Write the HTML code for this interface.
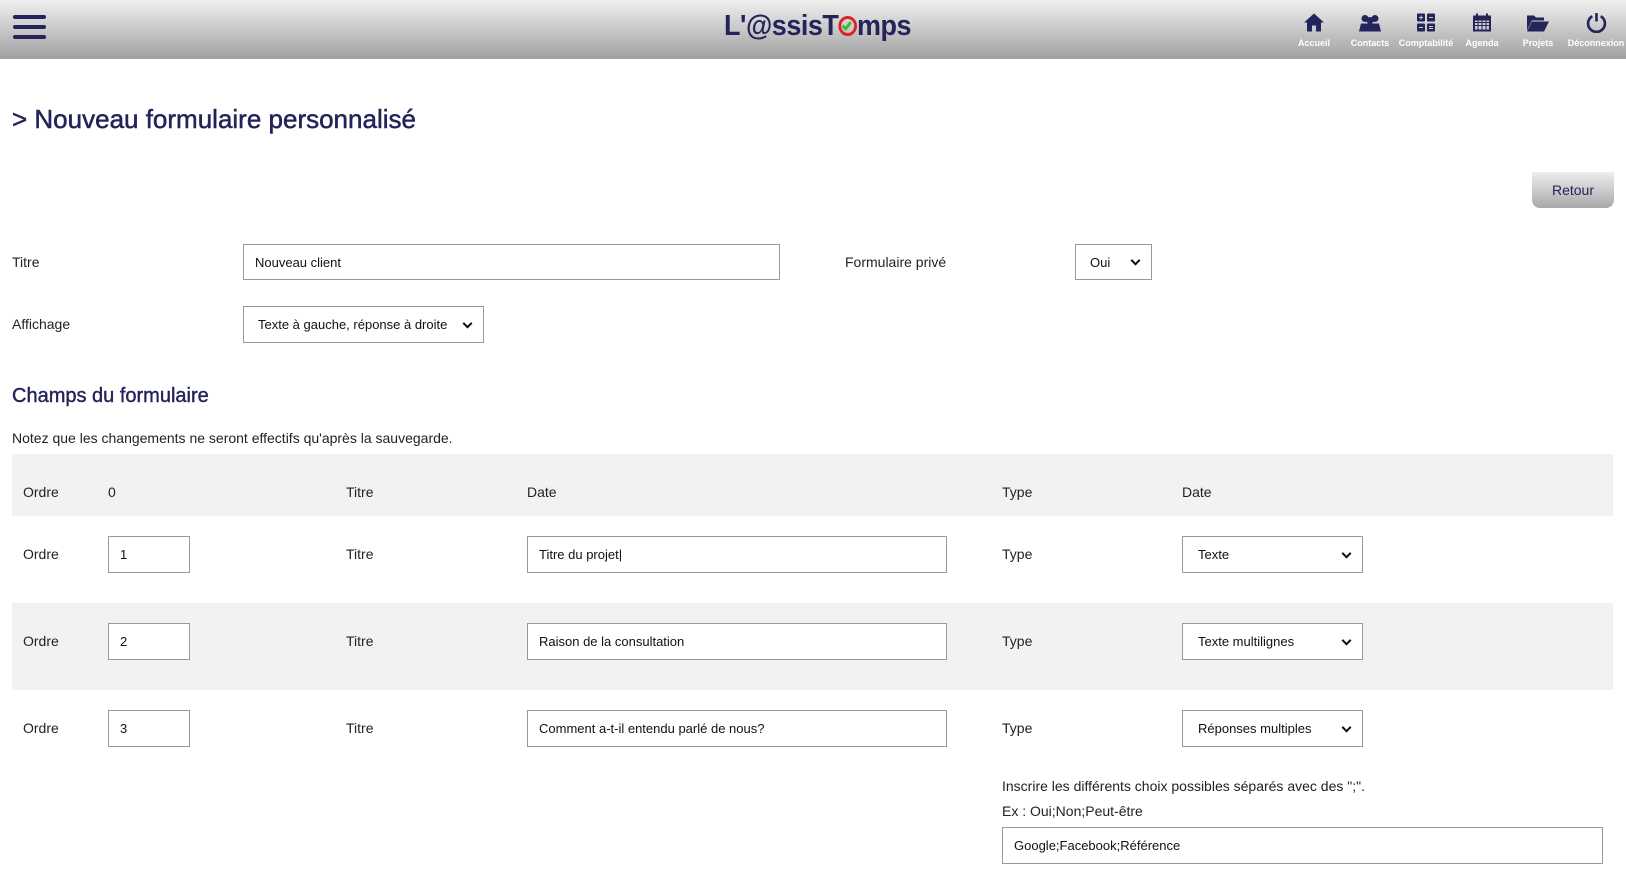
<!DOCTYPE html>
<html><head><meta charset="utf-8"><style>
*{box-sizing:border-box;margin:0;padding:0}
body{width:1626px;height:876px;overflow:hidden;background:#fff;font-family:"Liberation Sans",Arial,sans-serif;color:#222;font-size:14px;position:relative}
.hdr{position:absolute;left:0;top:0;width:1626px;height:59px;background:linear-gradient(#f0f0f0,#a0a0a0)}
.burger{position:absolute;left:13px;top:15px;width:33px}
.burger div{height:4px;background:#24235a;border-radius:2px;margin-bottom:6px}
.logo{position:absolute;left:724px;top:10px;font-size:29px;font-weight:bold;color:#24235a;letter-spacing:-0.5px;transform:scaleX(0.93);transform-origin:left}
.nav{position:absolute;top:12px;text-align:center;color:#fff;font-size:9px;font-weight:bold;width:56px}
.nav svg{display:block;margin:0 auto 5px}
.a{position:absolute;white-space:nowrap}
.inp{position:absolute;border:1px solid #999;background:#fff;font-size:13px;padding-left:11px;display:flex;align-items:center;color:#111}
.sel::after{content:"";position:absolute;right:12px;top:50%;width:5px;height:5px;border-right:2px solid #111;border-bottom:2px solid #111;transform:translateY(-70%) rotate(45deg)}
.band{position:absolute;left:12px;width:1601px;background:#f2f2f2}
h1{position:absolute;left:12px;top:104px;font-size:26px;color:#24235a;font-weight:normal;-webkit-text-stroke:0.5px #24235a}
h2{position:absolute;left:12px;top:385px;font-size:20px;color:#24235a;font-weight:normal;-webkit-text-stroke:0.4px #24235a}
.btn{position:absolute;left:1532px;top:172px;width:82px;height:36px;border-radius:0 0 8px 8px;background:linear-gradient(#eee,#a8a8a8);color:#24235a;font-size:14px;display:flex;align-items:center;justify-content:center}
</style></head><body>
<div class="hdr">
<div class="burger"><div></div><div></div><div></div></div>
<div class="logo">L'@ssisT<span style="display:inline-block;width:20px;height:20px;border:3px solid #d22;border-radius:50%;vertical-align:-1px;position:relative"><span style="position:absolute;left:3px;top:1px;width:6px;height:10px;border-right:3px solid #3b3;border-bottom:3px solid #3b3;transform:rotate(40deg)"></span></span>mps</div>
<div class="nav" style="left:1286px"><svg width="22" height="21" viewBox="0 0 22 20"><path d="M11 1L1 10h3v9h5v-6h4v6h5v-9h3z" fill="#24235a"/></svg>Accueil</div>
<div class="nav" style="left:1342px"><svg width="24" height="21" viewBox="0 0 24 20"><circle cx="7" cy="6" r="3.5" fill="#24235a"/><circle cx="17" cy="6" r="3.5" fill="#24235a"/><circle cx="12" cy="8" r="3.5" fill="#24235a"/><path d="M1 19l2-8h8l2 8zM11 19l2-8h8l2 8zM6 19l2-8h8l2 8z" fill="#24235a"/></svg>Contacts</div>
<div class="nav" style="left:1398px"><svg width="20" height="21" viewBox="0 0 20 20"><rect x="1" y="1" width="8" height="8" rx="1" fill="#24235a"/><rect x="11" y="1" width="8" height="8" rx="1" fill="#24235a"/><rect x="1" y="11" width="8" height="8" rx="1" fill="#24235a"/><rect x="11" y="11" width="8" height="8" rx="1" fill="#24235a"/><path d="M3 5h4M5 3v4M13 5h4M3 15h4M13 14h4M13 16h4" stroke="#ccc"/></svg>Comptabilité</div>
<div class="nav" style="left:1454px"><svg width="20" height="21" viewBox="0 0 20 20"><rect x="1" y="3" width="18" height="16" fill="#24235a"/><rect x="3" y="8" width="14" height="9" fill="#ccc"/><path d="M3 10h14M3 13h14M6 8v9M10 8v9M14 8v9" stroke="#24235a"/><path d="M5 1v4M15 1v4" stroke="#24235a" stroke-width="2"/></svg>Agenda</div>
<div class="nav" style="left:1510px"><svg width="24" height="21" viewBox="0 0 24 20"><path d="M1 3h7l2 2h8v3H6L1 18z" fill="#24235a"/><path d="M6 9h17l-5 10H1z" fill="#24235a"/></svg>Projets</div>
<div class="nav" style="left:1566px;width:60px"><svg width="21" height="21" viewBox="0 0 20 20"><path d="M6 4a8 8 0 1 0 8 0" fill="none" stroke="#24235a" stroke-width="2.5"/><path d="M10 1v8" stroke="#24235a" stroke-width="2.5"/></svg>Déconnexion</div>
</div>
<h1>&gt; Nouveau formulaire personnalisé</h1>
<div class="btn">Retour</div>
<div class="a" style="left:12px;top:254px">Titre</div>
<div class="inp" style="left:243px;top:244px;width:537px;height:36px">Nouveau client</div>
<div class="a" style="left:845px;top:254px">Formulaire privé</div>
<div class="inp sel" style="left:1075px;top:244px;width:77px;height:36px;padding-left:14px">Oui</div>
<div class="a" style="left:12px;top:316px">Affichage</div>
<div class="inp sel" style="left:243px;top:306px;width:241px;height:37px;padding-left:14px">Texte à gauche, réponse à droite</div>
<h2>Champs du formulaire</h2>
<div class="a" style="left:12px;top:430px">Notez que les changements ne seront effectifs qu'après la sauvegarde.</div>
<div class="band" style="top:454px;height:62px"></div>
<div class="band" style="top:603px;height:87px"></div>
<div class="a" style="left:23px;top:484px">Ordre</div><div class="a" style="left:108px;top:484px">0</div><div class="a" style="left:346px;top:484px">Titre</div><div class="a" style="left:527px;top:484px">Date</div><div class="a" style="left:1002px;top:484px">Type</div><div class="a" style="left:1182px;top:484px">Date</div>

<div class="a" style="left:23px;top:546px">Ordre</div><div class="inp" style="left:108px;top:536px;width:82px;height:37px">1</div><div class="a" style="left:346px;top:546px">Titre</div><div class="inp" style="left:527px;top:536px;width:420px;height:37px">Titre du projet|</div><div class="a" style="left:1002px;top:546px">Type</div><div class="inp sel" style="left:1182px;top:536px;width:181px;height:37px;padding-left:15px">Texte</div>

<div class="a" style="left:23px;top:633px">Ordre</div><div class="inp" style="left:108px;top:623px;width:82px;height:37px">2</div><div class="a" style="left:346px;top:633px">Titre</div><div class="inp" style="left:527px;top:623px;width:420px;height:37px">Raison de la consultation</div><div class="a" style="left:1002px;top:633px">Type</div><div class="inp sel" style="left:1182px;top:623px;width:181px;height:37px;padding-left:15px">Texte multilignes</div>

<div class="a" style="left:23px;top:720px">Ordre</div><div class="inp" style="left:108px;top:710px;width:82px;height:37px">3</div><div class="a" style="left:346px;top:720px">Titre</div><div class="inp" style="left:527px;top:710px;width:420px;height:37px">Comment a-t-il entendu parlé de nous?</div><div class="a" style="left:1002px;top:720px">Type</div><div class="inp sel" style="left:1182px;top:710px;width:181px;height:37px;padding-left:15px">Réponses multiples</div>

<div class="a" style="left:1002px;top:778px">Inscrire les différents choix possibles séparés avec des ";".</div>
<div class="a" style="left:1002px;top:803px">Ex : Oui;Non;Peut-être</div>
<div class="inp" style="left:1002px;top:827px;width:601px;height:37px">Google;Facebook;Référence</div>
</body></html>
